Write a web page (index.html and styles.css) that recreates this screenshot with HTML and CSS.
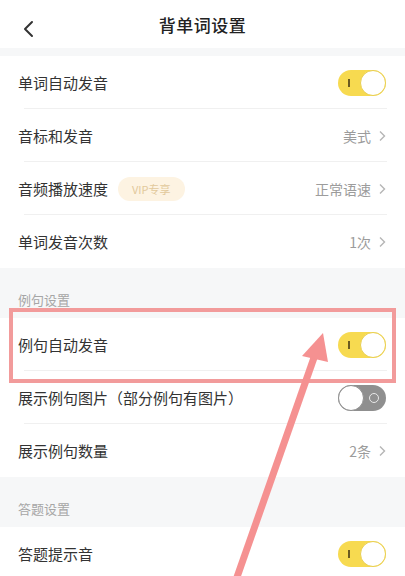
FILE: index.html
```html
<!DOCTYPE html>
<html lang="zh">
<head>
<meta charset="utf-8">
<link rel="stylesheet" href="styles.css">
</head>
<body>
<div class="page">
  <header class="topbar">
    <svg class="back" width="14" height="18" viewBox="0 0 14 18"><polyline points="10,2 3,9 10,16" fill="none" stroke="#333" stroke-width="2" stroke-linecap="round" stroke-linejoin="round"/></svg>
    <h1 class="title">背单词设置</h1>
  </header>
  <div class="gap"></div>

  <div class="row">
    <span class="label">单词自动发音</span>
    <span class="toggle on"><span class="mark"></span><span class="knob"></span></span>
  </div>
  <div class="row">
    <span class="label">音标和发音</span>
    <span class="value">美式<svg class="chev" width="8" height="12" viewBox="0 0 8 12"><polyline points="2,1.5 6.5,6 2,10.5" fill="none" stroke="#b5b5b5" stroke-width="1.4"/></svg></span>
  </div>
  <div class="row">
    <span class="label">音频播放速度<span class="vip">VIP专享</span></span>
    <span class="value">正常语速<svg class="chev" width="8" height="12" viewBox="0 0 8 12"><polyline points="2,1.5 6.5,6 2,10.5" fill="none" stroke="#b5b5b5" stroke-width="1.4"/></svg></span>
  </div>
  <div class="row last">
    <span class="label">单词发音次数</span>
    <span class="value">1次<svg class="chev" width="8" height="12" viewBox="0 0 8 12"><polyline points="2,1.5 6.5,6 2,10.5" fill="none" stroke="#b5b5b5" stroke-width="1.4"/></svg></span>
  </div>

  <div class="section">例句设置</div>
  <div class="row">
    <span class="label">例句自动发音</span>
    <span class="toggle on"><span class="mark"></span><span class="knob"></span></span>
  </div>
  <div class="row">
    <span class="label">展示例句图片（部分例句有图片）</span>
    <span class="toggle off"><span class="knob"></span><span class="ring"></span></span>
  </div>
  <div class="row last">
    <span class="label">展示例句数量</span>
    <span class="value">2条<svg class="chev" width="8" height="12" viewBox="0 0 8 12"><polyline points="2,1.5 6.5,6 2,10.5" fill="none" stroke="#b5b5b5" stroke-width="1.4"/></svg></span>
  </div>

  <div class="section">答题设置</div>
  <div class="row last">
    <span class="label">答题提示音</span>
    <span class="toggle on"><span class="mark"></span><span class="knob"></span></span>
  </div>

  <div class="highlight"></div>
  <svg class="arrow" width="405" height="576" viewBox="0 0 405 576">
    <line x1="236" y1="580" x2="316" y2="352" stroke="#f59191" stroke-width="7"/>
    <polygon points="323,333 302,356 328,362" fill="#f59191"/>
  </svg>
</div>
</body>
</html>
```
FILE: styles.css
```css
html, body {
  margin: 0;
  padding: 0;
  background: #ffffff;
}
body {
  font-family: "Noto Sans CJK SC", "Noto Sans", sans-serif;
  color: #333333;
}
.page {
  position: relative;
  width: 405px;
  height: 576px;
  overflow: hidden;
}
.topbar {
  position: relative;
  height: 48px;
  display: flex;
  align-items: center;
  justify-content: center;
}
.back {
  position: absolute;
  left: 22px;
  top: 20px;
}
.title {
  margin: 0;
  font-size: 17px;
  font-weight: 500;
  color: #222222;
  letter-spacing: 0.5px;
}
.gap {
  height: 8px;
  background: #f6f7f8;
}
.row {
  height: 53px;
  display: flex;
  align-items: center;
  justify-content: space-between;
  padding: 0 19px 0 18px;
  position: relative;
}
.row::after {
  content: "";
  position: absolute;
  left: 24px;
  right: 18px;
  bottom: 0;
  height: 1px;
  background: #f0f0f0;
}
.row.last::after {
  display: none;
}
.label {
  font-size: 15px;
  color: #333333;
  display: flex;
  align-items: center;
}
.vip {
  margin-left: 10px;
  height: 24px;
  padding: 0 14px;
  border-radius: 12px;
  background: #fdf3e2;
  color: #e2c99c;
  font-size: 11px;
  display: inline-flex;
  align-items: center;
}
.value {
  font-size: 14px;
  color: #9c9c9c;
  display: flex;
  align-items: center;
  gap: 7px;
}
.toggle {
  position: relative;
  width: 48px;
  height: 26px;
  border-radius: 13px;
  display: inline-block;
}
.toggle.on {
  background: #f7da50;
}
.toggle.off {
  background: #8f8f8f;
}
.knob {
  position: absolute;
  top: 0;
  width: 26px;
  height: 26px;
  box-sizing: border-box;
  border-radius: 50%;
  background: #ffffff;
}
.toggle.on .knob {
  right: 0;
  border: 1.5px solid #e9cf4f;
}
.toggle.off .knob {
  left: 0;
  border: 1.5px solid #8f8f8f;
}
.mark {
  position: absolute;
  left: 10px;
  top: 9px;
  width: 1.5px;
  height: 8px;
  background: #6a5a20;
}
.ring {
  position: absolute;
  right: 7px;
  top: 8px;
  width: 10px;
  height: 10px;
  box-sizing: border-box;
  border-radius: 50%;
  border: 1.5px solid #e8e8e8;
}
.section {
  height: 50px;
  box-sizing: border-box;
  padding: 23px 18px 0;
  background: #f6f7f8;
  font-size: 13px;
  color: #a6a6a6;
  line-height: 18px;
}
.highlight {
  position: absolute;
  left: 9px;
  top: 308px;
  width: 387px;
  height: 75px;
  box-sizing: border-box;
  border: 4px solid #f29b9b;
  pointer-events: none;
}
.arrow {
  position: absolute;
  left: 0;
  top: 0;
  pointer-events: none;
}
```
